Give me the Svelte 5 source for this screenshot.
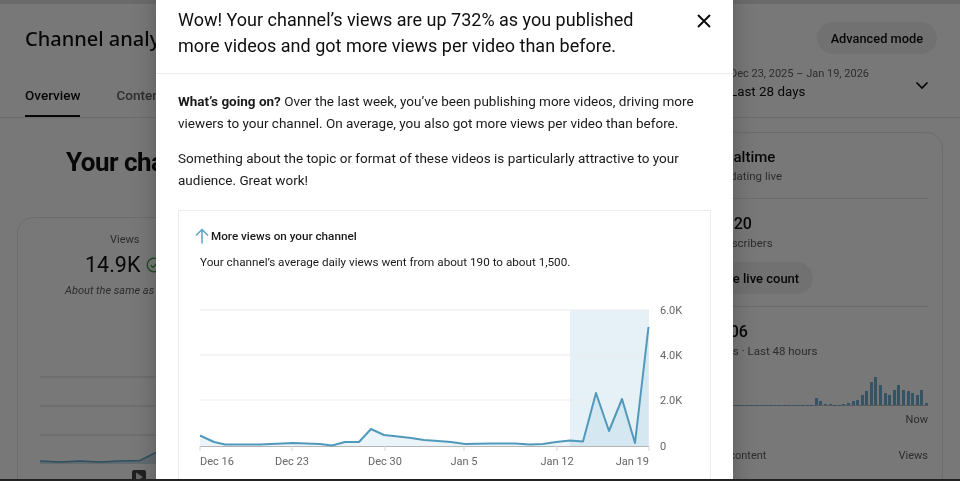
<script lang="ts">
	const viewPoints = [
		[200, 435.5], [214, 442], [225, 444.5], [260, 444.5], [293, 443], [320, 444], [332, 445.5],
		[345, 442], [359, 442], [371, 429], [384, 435], [398, 436.5], [411, 438], [424, 440],
		[438, 441], [451, 442], [465, 444], [490, 443.5], [515, 443.5], [530, 444.5], [543, 444],
		[556, 442], [570, 440.5], [583, 441.5], [596, 393], [609, 431], [622, 399], [635, 443], [648.5, 327]
	];
	const line = viewPoints.map((p) => p.join(',')).join(' ');
	const area = `200,446 ${line} 648.5,446`;

	const xLabels = [
		{ x: 200, label: 'Dec 16', anchor: 'start' },
		{ x: 292, label: 'Dec 23', anchor: 'middle' },
		{ x: 385, label: 'Dec 30', anchor: 'middle' },
		{ x: 464, label: 'Jan 5', anchor: 'middle' },
		{ x: 557, label: 'Jan 12', anchor: 'middle' },
		{ x: 649, label: 'Jan 19', anchor: 'end' }
	];
	const yLabels = [
		{ y: 310, label: '6.0K' },
		{ y: 355, label: '4.0K' },
		{ y: 400, label: '2.0K' },
		{ y: 446, label: '0' }
	];

	const bars = [
		0.5, 0.5, 0.5, 0.5, 0.5, 0.5, 0.5, 0.5, 0.5, 0.5, 0.5, 0.5, 0.5, 0.5, 0.5, 0.5, 0.5, 0.5, 0.5, 0.5, 0.5, 0.5,
		7, 4, 1.5, 1.5, 0.5, 0.5, 1, 2, 4, 5, 10, 14, 23, 28, 20, 12, 10, 15, 20, 15, 14, 12, 10, 15, 2
	];
</script>

<div class="screen">
	<div class="page">
		<header class="head">
			<h2 class="title">Channel analytics</h2>
			<button class="advanced">Advanced mode</button>
		</header>

		<div class="tabs">
			<div class="tab-list">
				<span class="tab active">Overview</span>
				<span class="tab">Content</span>
			</div>
			<div class="range">
				<div>
					<p class="range-dates">Dec 23, 2025 – Jan 19, 2026</p>
					<p class="range-name">Last 28 days</p>
				</div>
				<svg class="chev" viewBox="0 0 14 9" width="14" height="9">
					<path d="M1.5 1.5 7 7l5.5-5.5" fill="none" stroke="#0a0a0a" stroke-width="1.7" />
				</svg>
			</div>
		</div>

		<div class="content">
			<section class="left">
				<h1>Your channel got 14,900 views</h1>
				<div class="stat-card">
					<p class="stat-label">Views</p>
					<p class="stat-value">
						14.9K
						<svg viewBox="0 0 16 16" width="16" height="16">
							<circle cx="8" cy="8" r="6.8" fill="none" stroke="#35a33d" stroke-width="1.3" />
							<path d="M4.8 8.2 7 10.4l4.2-4.4" fill="none" stroke="#35a33d" stroke-width="1.3" />
						</svg>
					</p>
					<p class="stat-note">About the same as usual</p>
					<svg class="mini" viewBox="0 0 130 105" width="130" height="105">
						<path d="M0 1H130M0 30H130M0 59H130" stroke="#d8d8d8" stroke-width="1" />
						<path d="M0 85 40 85.500 70 85 100 84 115 77 130 71V88H0Z" fill="#cfe3ee" />
						<polyline points="0,85 20,86 40,85 60,86 80,85 100,84.500 115,77 130,70" fill="none" stroke="#62a8cc" stroke-width="1.6" />
						<rect x="92" y="94" width="14" height="14" rx="2" fill="#444" />
						<path d="M96 96.500 103 101 96 105.500Z" fill="#ddd" />
					</svg>
				</div>
			</section>

			<aside class="realtime">
				<div class="rt-block first">
					<p class="rt-title">Realtime</p>
					<p class="rt-sub">Updating live</p>
				</div>
				<div class="rt-block subs">
					<p class="rt-num">1,120</p>
					<p class="rt-sub">Subscribers</p>
					<button class="live">See live count</button>
				</div>
				<div class="rt-block views">
					<p class="rt-num">1,006</p>
					<p class="rt-sub">Views · Last 48 hours</p>
					<div class="bars">
						{#each bars as h}
							<span class="bar" style="height: {h}px"></span>
						{/each}
					</div>
					<p class="now">Now</p>
					<div class="rt-foot">
						<span>Top content</span>
						<span>Views</span>
					</div>
				</div>
			</aside>
		</div>
	</div>

	<div class="scrim"></div>

	<div class="modal">
		<div class="modal-head">
			<p>Wow! Your channel’s views are up 732% as you published more videos and got more views per video than before.</p>
			<svg class="close" viewBox="0 0 14 14" width="14" height="14">
				<path d="M1 1 13 13M13 1 1 13" stroke="#0a0a0a" stroke-width="1.9" />
			</svg>
		</div>
		<div class="modal-body">
			<p><strong>What’s going on?</strong> Over the last week, you’ve been publishing more videos, driving more viewers to your channel. On average, you also got more views per video than before.</p>
			<p>Something about the topic or format of these videos is particularly attractive to your audience. Great work!</p>

			<div class="insight">
				<div class="insight-title">
					<svg viewBox="0 0 14 16" width="14" height="16">
						<path d="M7 15.500V1.500M1 7.500 7 1.500l6 6" fill="none" stroke="#5ba3c4" stroke-width="1.5" />
					</svg>
					<span>More views on your channel</span>
				</div>
				<p class="insight-text">Your channel’s average daily views went from about 190 to about 1,500.</p>
				<svg class="chart" viewBox="179 280 531 199" width="531" height="199">
					<rect x="570" y="310" width="79" height="136" fill="#e6f1f7" />
					<path d="M200 310H649M200 355H649M200 400H649" stroke="#ebebeb" stroke-width="1" />
					<polygon points={area} fill="#5ba3c4" opacity="0.12" />
					<path d="M200 446.500H649" stroke="#b5b5b5" stroke-width="1" />
					<path d="M200 446v5M292 446v5M385 446v5M464 446v5M557 446v5M649 446v5" stroke="#d5d5d5" stroke-width="1" />
					<polyline points={line} fill="none" stroke="#5199bb" stroke-width="2" stroke-linejoin="round" />
					{#each xLabels as t}
						<text class="tick" x={t.x} y="465" text-anchor={t.anchor}>{t.label}</text>
					{/each}
					{#each yLabels as t}
						<text class="tick" x="660" y={t.y + 4}>{t.label}</text>
					{/each}
				</svg>
			</div>
		</div>
	</div>

	<div class="bottom-edge"></div>
</div>

<style>
	:global(body) {
		margin: 0;
	}

	p,
	h1,
	h2 {
		margin: 0;
	}

	button {
		border: 0;
		font: inherit;
		color: inherit;
	}

	.screen {
		position: relative;
		width: 960px;
		height: 481px;
		overflow: hidden;
		font-family: Roboto, "Liberation Sans", sans-serif;
		color: #0f0f0f;
		background: #fff;
		filter: blur(0.35px);
	}

	.page {
		display: flex;
		flex-direction: column;
		height: 100%;
		box-sizing: border-box;
		border-top: 4px solid #e4e4e4;
	}

	.head {
		flex: none;
		display: flex;
		align-items: center;
		justify-content: space-between;
		height: 50px;
		margin-top: 9px;
		padding: 0 23px 0 25px;
	}

	.title {
		font-family: "Noto Sans", sans-serif;
		font-size: 20px;
		font-weight: 500;
	}

	.advanced {
		height: 32px;
		padding: 0 14px;
		border-radius: 16px;
		background: #f0f0f0;
		font-size: 12.800px;
		font-weight: 500;
	}

	.tabs {
		flex: none;
		display: flex;
		justify-content: space-between;
		height: 54px;
		border-bottom: 1px solid #e5e5e5;
		padding: 0 31px 0 25px;
	}

	.tab-list {
		display: flex;
		gap: 36px;
	}

	.tab {
		height: 54px;
		box-sizing: border-box;
		padding-top: 24px;
		font-size: 13.500px;
		font-weight: 500;
		color: #606060;
	}

	.tab.active {
		color: #0f0f0f;
		border-bottom: 2px solid #0f0f0f;
	}

	.range {
		display: flex;
		align-items: flex-start;
		gap: 46px;
		padding-top: 3px;
	}

	.range-dates {
		font-size: 11px;
		color: #606060;
		line-height: 16px;
	}

	.range-name {
		margin-top: 1px;
		font-size: 13.400px;
		line-height: 18px;
	}

	.chev {
		margin-top: 15px;
	}

	.content {
		display: flex;
		justify-content: space-between;
		padding: 14px 17px 0;
	}

	.left {
		width: 660px;
	}

	h1 {
		margin: 14px 0 0 49px;
		font-size: 26px;
		font-weight: 700;
		line-height: 32px;
		letter-spacing: -0.5px;
		white-space: nowrap;
	}

	.stat-card {
		height: 300px;
		margin-top: 39px;
		padding-top: 15px;
		border: 1px solid #e5e5e5;
		border-radius: 16px;
	}

	.stat-label {
		margin-left: 92px;
		font-size: 11px;
		color: #606060;
	}

	.stat-value {
		display: flex;
		align-items: center;
		gap: 6px;
		margin: 4px 0 0 67px;
		font-size: 21.500px;
		line-height: 30px;
	}

	.stat-note {
		margin: 4px 0 0 47px;
		font-size: 11px;
		font-style: italic;
		color: #606060;
	}

	.mini {
		display: block;
		margin: 79px 0 0 22px;
	}

	.realtime {
		width: 243px;
		box-sizing: border-box;
		height: 360px;
		padding: 0 14px 0 7px;
		border: 1px solid #e5e5e5;
		border-radius: 16px;
	}

	.rt-block + .rt-block {
		border-top: 1px solid #e5e5e5;
	}

	.first {
		height: 65px;
		padding: 14px 0 0 8px;
		box-sizing: border-box;
	}

	.rt-title {
		font-size: 15px;
		font-weight: 500;
		line-height: 20px;
	}

	.rt-num {
		font-size: 16px;
		font-weight: 500;
		line-height: 20px;
	}

	.rt-sub {
		margin-top: 1px;
		font-size: 11.500px;
		line-height: 17px;
		color: #606060;
	}

	.subs {
		box-sizing: border-box;
		height: 108px;
		padding: 15px 0 0 4px;
	}

	.live {
		display: block;
		height: 32px;
		margin: 10px 0 0 -8px;
		padding: 0 14px;
		border-radius: 16px;
		background: #f0f0f0;
		font-size: 13px;
		font-weight: 500;
	}

	.views {
		padding-top: 15px;
	}

	.bars {
		display: flex;
		justify-content: flex-end;
		align-items: flex-end;
		gap: 1.600px;
		height: 29px;
		margin-top: 16px;
		border-bottom: 1px solid #c0c0c0;
	}

	.bar {
		width: 3px;
		flex: none;
		background: #6fb1d4;
	}

	.now {
		margin-top: 7px;
		font-size: 11px;
		color: #606060;
		text-align: right;
	}

	.rt-foot {
		display: flex;
		justify-content: space-between;
		margin-top: 23px;
		font-size: 11px;
		color: #606060;
	}

	.scrim {
		position: absolute;
		inset: 0;
		background: rgba(0, 0, 0, 0.53);
	}

	.modal {
		position: absolute;
		left: 156px;
		top: -16px;
		width: 577px;
		height: 520px;
		border-radius: 16px;
		background: #fff;
		box-shadow: 0 0 24px rgba(0, 0, 0, 0.25);
	}

	.modal-head {
		display: flex;
		align-items: flex-start;
		justify-content: space-between;
		height: 90px;
		box-sizing: border-box;
		padding: 23px 22px 0;
		border-bottom: 1px solid #ececec;
	}

	.modal-head p {
		width: 480px;
		font-size: 18px;
		line-height: 26px;
		color: #0f0f0f;
	}

	.close {
		margin: 7px 0 0;
	}

	.modal-body {
		padding: 16px 22px 0;
		font-size: 13.500px;
		line-height: 22px;
		color: #1a1a1a;
	}

	.modal-body p + p {
		margin-top: 13px;
	}

	.insight {
		box-sizing: border-box;
		width: 533px;
		height: 280px;
		margin-top: 19px;
		border: 1px solid #ececec;
	}

	.insight-title {
		display: flex;
		align-items: center;
		gap: 2px;
		margin: 17px 0 0 16px;
		height: 16px;
		font-size: 11.700px;
		font-weight: 500;
		line-height: 16px;
	}

	.insight-text {
		margin: 9px 0 0 21px;
		font-size: 11.700px;
		line-height: 18px;
		color: #1a1a1a;
	}

	.chart {
		display: block;
		margin-top: 9px;
	}

	.tick {
		font-size: 11px;
		fill: #666;
	}

	.bottom-edge {
		position: absolute;
		left: 0;
		right: 0;
		bottom: 0;
		height: 2px;
		background: #222;
	}
</style>
